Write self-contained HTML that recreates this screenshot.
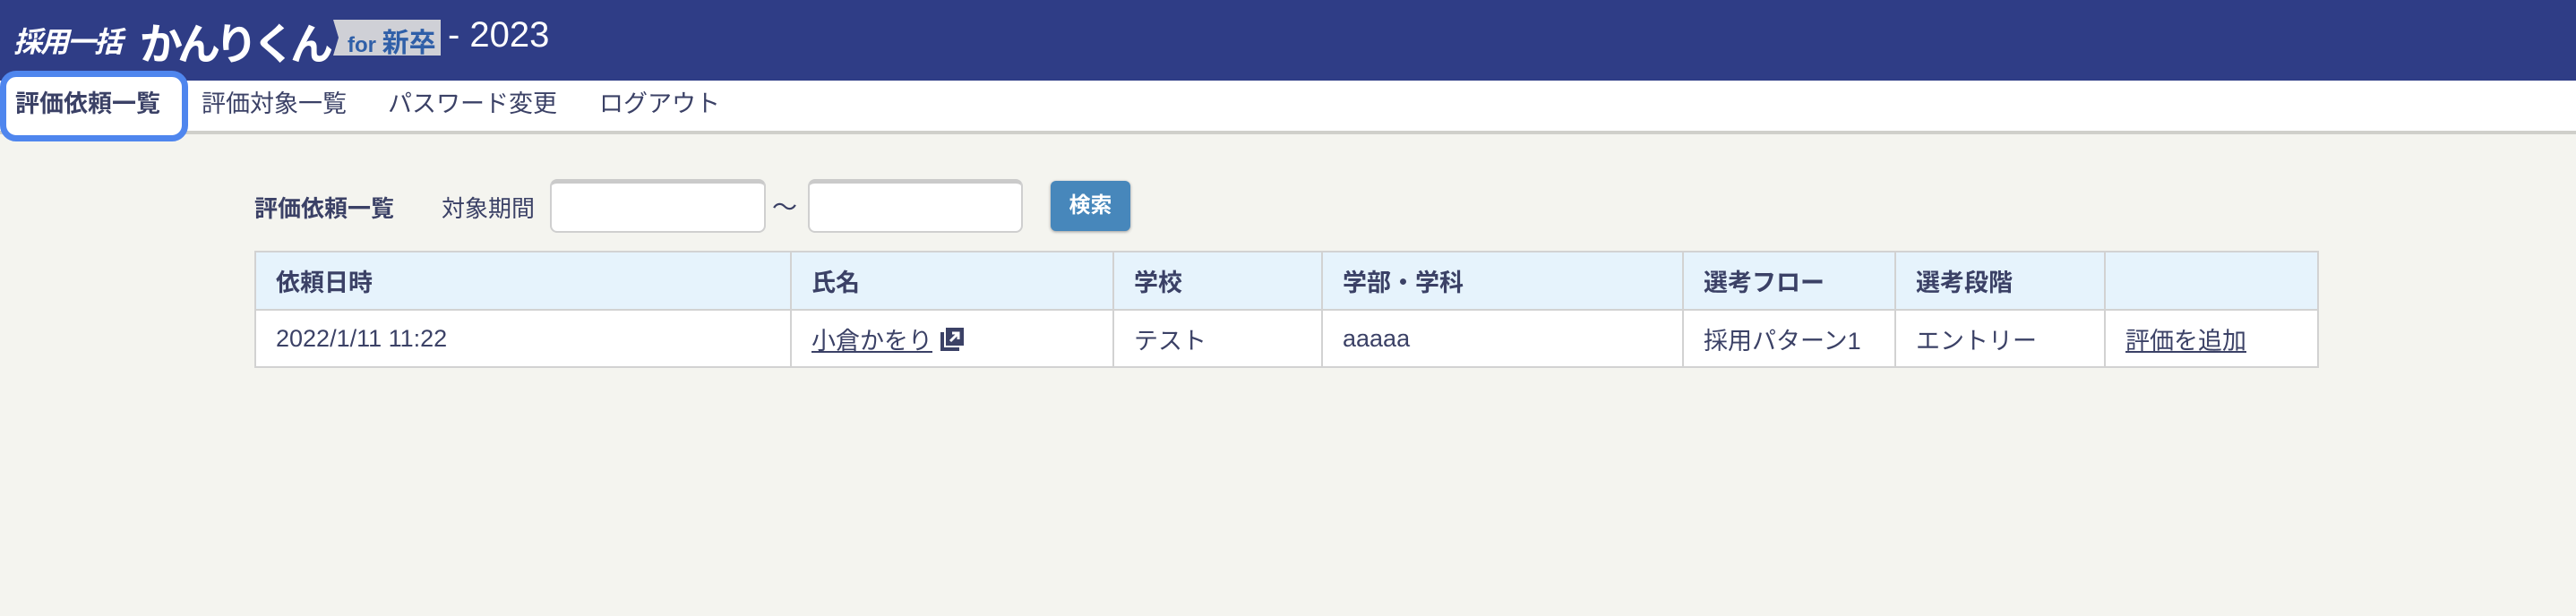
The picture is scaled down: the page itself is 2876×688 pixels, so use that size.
<!DOCTYPE html>
<html><head><meta charset="utf-8"><style>
*{margin:0;padding:0;box-sizing:border-box}
body{width:2876px;height:688px;background:#f4f4ef;font-family:"Liberation Sans","Noto Sans CJK JP",sans-serif;color:#3b4166;position:relative;overflow:hidden}
.hdr{position:absolute;left:0;top:0;width:2876px;height:90px;background:#2f3d86}
.nav{position:absolute;left:0;top:90px;width:2876px;height:60px;background:#fff;border-bottom:4px solid #cfcfca}
.a{position:absolute;font-size:27px;top:100px;line-height:32px;white-space:nowrap}
.ring{position:absolute;left:0;top:79px;width:210px;height:79px;border:7px solid #4f86ee;border-radius:18px;background:#fff}
.t{position:absolute;white-space:nowrap}
input{position:absolute;border:2px solid #cfcfcf;border-top:5px solid #cacaca;border-radius:8px;background:#fff}
table{position:absolute;left:284px;top:280px;width:2305px;border-collapse:collapse;font-size:27px}
td,th{border:2px solid #d2d2d2;text-align:left;padding:0 0 0 22px}
th{background:#e6f3fc;height:65px;font-weight:bold}
td{background:#fff;height:64px}
a{color:#3b4166;text-decoration:underline}
</style></head><body>
<div class="hdr"></div>
<div class="t" style="left:15px;top:22px;font-size:32px;font-weight:bold;font-style:italic;color:#fff;letter-spacing:-2px">採用一括</div>
<div class="t" style="left:156px;top:10px;font-size:48px;font-weight:bold;color:#fff;letter-spacing:-6px">かんりくん</div>
<div class="t" style="left:372px;top:22px;width:120px;height:40px;background:#cfd0d6;clip-path:polygon(0 0,100% 0,100% 100%,0 100%,6px 50%)"></div>
<div class="t" style="left:388px;top:23px;font-size:24px;font-weight:bold;color:#2f5fa8">for <span style="font-size:30px">新卒</span></div>
<div class="t" style="left:500px;top:17px;font-size:40px;color:#fff">- 2023</div>
<div class="nav"></div>
<div class="ring"></div>
<div class="a" style="left:17px;font-weight:bold">評価依頼一覧</div>
<div class="a" style="left:225px">評価対象一覧</div>
<div class="a" style="left:433px">パスワード変更</div>
<div class="a" style="left:669px">ログアウト</div>
<div class="t" style="left:284px;top:213px;font-size:26px;font-weight:bold">評価依頼一覧</div>
<div class="t" style="left:493px;top:213px;font-size:26px">対象期間</div>
<input style="left:614px;top:200px;width:241px;height:60px">
<div class="t" style="left:862px;top:210px;font-size:28px">〜</div>
<input style="left:902px;top:200px;width:240px;height:60px">
<div class="t" style="left:1173px;top:202px;width:89px;height:56px;background:#4787bb;border-radius:6px;box-shadow:0 1px 3px #999;color:#fff;font-size:24px;font-weight:bold;text-align:center;line-height:56px">検索</div>
<table>
<tr><th style="width:598px">依頼日時</th><th style="width:360px">氏名</th><th style="width:233px">学校</th><th style="width:403px">学部・学科</th><th style="width:237px">選考フロー</th><th style="width:234px">選考段階</th><th></th></tr>
<tr><td>2022/1/11 11:22</td><td><a>小倉かをり</a> <svg width="28" height="28" viewBox="0 0 28 28" style="vertical-align:-3px"><path d="M1 6v21h21v-4H5V6z" fill="#3b4166"/><rect x="7" y="1" width="20" height="20" fill="#3b4166"/><path d="M12 16l9-9M14 7h7v7" stroke="#fff" stroke-width="3" fill="none"/></svg></td><td>テスト</td><td>aaaaa</td><td>採用パターン1</td><td>エントリー</td><td><a>評価を追加</a></td></tr>
</table>
</body></html>
